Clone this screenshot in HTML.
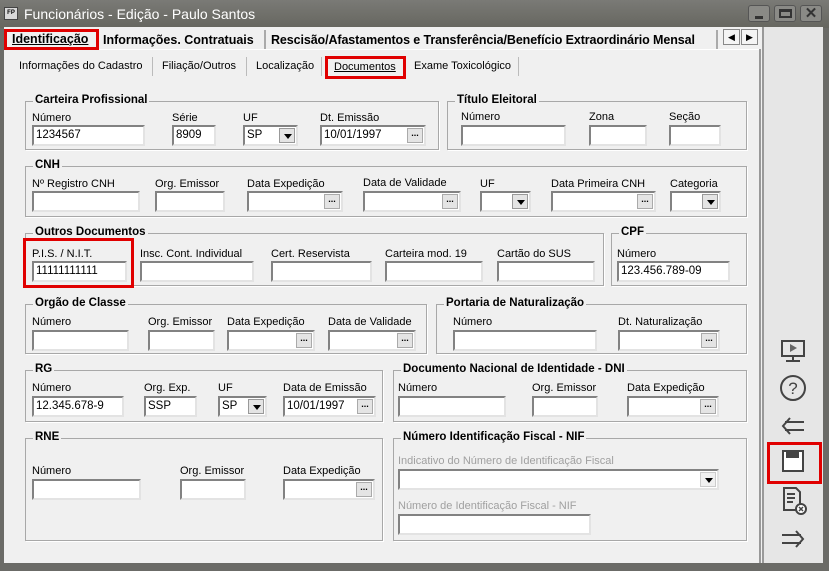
<!DOCTYPE html><html><head><meta charset="utf-8"><style>
*{margin:0;padding:0;box-sizing:border-box}
body{width:829px;height:571px;overflow:hidden;background:#6b6b67;font-family:"Liberation Sans",sans-serif;font-size:12px;color:#000;position:relative}
div,span{position:absolute}
.t{white-space:nowrap;font-size:11px}
.b{font-weight:bold;font-size:12px}
.g{position:absolute;border:1px solid #a8a8a8;box-shadow:1px 1px 0 #fff}
.g>.lg{top:-8px;left:7px;background:#f0f0f0;padding:0 2px;font-weight:bold;font-size:11.5px;white-space:nowrap}
.i{background:#fff;border:2px solid;border-color:#828282 #e3e3e3 #e3e3e3 #828282;height:21px;padding:2px 0 0 2px;font-size:11.5px;white-space:nowrap}
.bt{position:absolute;right:1px;top:1px;width:16px;height:15px;background:#e4e4e4;border:1px solid #aaa;font-size:9px;line-height:8px;text-align:center;font-weight:bold}
.dd{position:absolute;right:1px;top:1px;width:16px;height:15px;background:#e4e4e4;border:1px solid #999}
.dd:after{content:"";position:absolute;left:4px;top:5px;border:4px solid transparent;border-top:5px solid #000}
.ds{color:#a0a0a0}
</style></head><body>
<div style="left:0;top:0;width:829px;height:28px;background:linear-gradient(#7a7a76,#66665f)"></div>
<div style="left:4px;top:7px;width:14px;height:13px;background:#d8d8d8;border:1px solid #444;font-size:6px;font-weight:bold;text-align:center;line-height:11px">FP</div>
<div class="t" style="left:24px;top:6px;color:#fff;font-size:14px">Funcionários - Edição - Paulo Santos</div>
<div style="left:748px;top:5px;width:22px;height:17px;border:1px solid #555;border-radius:3px;background:#8a8a86"><span style="left:6px;top:10px;width:8px;height:3px;background:#333"></span></div>
<div style="left:774px;top:5px;width:22px;height:17px;border:1px solid #555;border-radius:3px;background:#8a8a86"><span style="left:4px;top:3px;width:13px;height:9px;border:2px solid #333;border-top-width:3px"></span></div>
<div style="left:800px;top:5px;width:22px;height:17px;border:1px solid #555;border-radius:3px;background:#8a8a86;color:#333;font-weight:bold;font-size:15px;text-align:center;line-height:15px">✕</div>
<div style="left:4px;top:27px;width:819px;height:536px;background:#f0f0f0"></div>
<div style="left:762px;top:27px;width:61px;height:536px;background:#e6e6e6;border-left:2px solid #999"></div>
<div style="left:4px;top:49px;width:757px;height:1px;background:#fff"></div>
<div style="left:759px;top:49px;width:2px;height:514px;background:#999"></div>
<div class="t b" style="left:12px;top:32px;font-size:12.5px;text-decoration:underline">Identificação</div>
<div style="left:4px;top:29px;width:95px;height:21px;border:3px solid #e00000"></div>
<div class="t b" style="left:103px;top:33px;font-size:12.5px">Informações. Contratuais</div>
<div style="left:264px;top:30px;width:2px;height:19px;background:#aaa"></div>
<div class="t b" style="left:271px;top:33px;font-size:12.5px;letter-spacing:-0.1px">Rescisão/Afastamentos e Transferência/Benefício Extraordinário Mensal</div>
<div style="left:716px;top:30px;width:2px;height:19px;background:#aaa"></div>
<div style="left:718px;top:28px;width:5px;height:20px;background:#f0f0f0"></div>
<div style="left:723px;top:29px;width:17px;height:16px;background:#f4f4f4;border:1px solid #888;font-size:9px;text-align:center;line-height:14px">◀</div>
<div style="left:741px;top:29px;width:17px;height:16px;background:#f4f4f4;border:1px solid #888;font-size:9px;text-align:center;line-height:14px">▶</div>
<div class="t" style="left:19px;top:60px">Informações do Cadastro</div>
<div style="left:152px;top:57px;width:1px;height:19px;background:#bbb"></div>
<div class="t" style="left:162px;top:60px">Filiação/Outros</div>
<div style="left:246px;top:57px;width:1px;height:19px;background:#bbb"></div>
<div class="t" style="left:256px;top:60px">Localização</div>
<div style="left:321px;top:57px;width:1px;height:19px;background:#bbb"></div>
<div class="t" style="left:334px;top:61px;text-decoration:underline">Documentos</div>
<div style="left:325px;top:56px;width:81px;height:23px;border:3px solid #e00000"></div>
<div class="t" style="left:414px;top:60px">Exame Toxicológico</div>
<div style="left:518px;top:57px;width:1px;height:19px;background:#bbb"></div>

<div class="g" style="left:25px;top:101px;width:414px;height:49px"><span class="lg">Carteira Profissional</span></div>
<div class="g" style="left:447px;top:101px;width:300px;height:49px"><span class="lg">Título Eleitoral</span></div>
<div class="g" style="left:25px;top:166px;width:722px;height:51px"><span class="lg">CNH</span></div>
<div class="g" style="left:25px;top:233px;width:579px;height:53px"><span class="lg">Outros Documentos</span></div>
<div class="g" style="left:611px;top:233px;width:136px;height:53px"><span class="lg">CPF</span></div>
<div class="g" style="left:25px;top:304px;width:402px;height:50px"><span class="lg">Orgão de Classe</span></div>
<div class="g" style="left:436px;top:304px;width:311px;height:50px"><span class="lg">Portaria de Naturalização</span></div>
<div class="g" style="left:25px;top:370px;width:358px;height:52px"><span class="lg">RG</span></div>
<div class="g" style="left:393px;top:370px;width:354px;height:52px"><span class="lg">Documento Nacional de Identidade - DNI</span></div>
<div class="g" style="left:25px;top:438px;width:358px;height:103px"><span class="lg">RNE</span></div>
<div class="g" style="left:393px;top:438px;width:354px;height:103px"><span class="lg">Número Identificação Fiscal - NIF</span></div>

<div class="t" style="left:32px;top:112px">Número</div><div class="i" style="left:32px;top:125px;width:113px">1234567</div>
<div class="t" style="left:172px;top:112px">Série</div><div class="i" style="left:172px;top:125px;width:44px">8909</div>
<div class="t" style="left:243px;top:112px">UF</div><div class="i" style="left:243px;top:125px;width:55px">SP<span class="dd"></span></div>
<div class="t" style="left:320px;top:112px">Dt. Emissão</div><div class="i" style="left:320px;top:125px;width:106px">10/01/1997<span class="bt">...</span></div>
<div class="t" style="left:461px;top:111px">Número</div><div class="i" style="left:461px;top:125px;width:105px"></div>
<div class="t" style="left:589px;top:111px">Zona</div><div class="i" style="left:589px;top:125px;width:58px"></div>
<div class="t" style="left:669px;top:111px">Seção</div><div class="i" style="left:669px;top:125px;width:52px"></div>
<div class="t" style="left:32px;top:178px">Nº Registro CNH</div><div class="i" style="left:32px;top:191px;width:108px"></div>
<div class="t" style="left:155px;top:178px">Org. Emissor</div><div class="i" style="left:155px;top:191px;width:70px"></div>
<div class="t" style="left:247px;top:178px">Data Expedição</div><div class="i" style="left:247px;top:191px;width:96px"><span class="bt">...</span></div>
<div class="t" style="left:363px;top:177px">Data de Validade</div><div class="i" style="left:363px;top:191px;width:98px"><span class="bt">...</span></div>
<div class="t" style="left:480px;top:178px">UF</div><div class="i" style="left:480px;top:191px;width:51px"><span class="dd"></span></div>
<div class="t" style="left:551px;top:178px">Data Primeira CNH</div><div class="i" style="left:551px;top:191px;width:105px"><span class="bt">...</span></div>
<div class="t" style="left:670px;top:178px">Categoria</div><div class="i" style="left:670px;top:191px;width:51px"><span class="dd"></span></div>
<div class="t" style="left:32px;top:248px">P.I.S. / N.I.T.</div><div class="i" style="left:32px;top:261px;width:95px">11111111111</div>
<div style="left:23px;top:238px;width:111px;height:50px;border:3px solid #e00000"></div>
<div class="t" style="left:140px;top:248px">Insc. Cont. Individual</div><div class="i" style="left:140px;top:261px;width:114px"></div>
<div class="t" style="left:271px;top:248px">Cert. Reservista</div><div class="i" style="left:271px;top:261px;width:101px"></div>
<div class="t" style="left:385px;top:248px">Carteira mod. 19</div><div class="i" style="left:385px;top:261px;width:98px"></div>
<div class="t" style="left:497px;top:248px">Cartão do SUS</div><div class="i" style="left:497px;top:261px;width:98px"></div>
<div class="t" style="left:617px;top:248px">Número</div><div class="i" style="left:617px;top:261px;width:113px">123.456.789-09</div>
<div class="t" style="left:32px;top:316px">Número</div><div class="i" style="left:32px;top:330px;width:97px"></div>
<div class="t" style="left:148px;top:316px">Org. Emissor</div><div class="i" style="left:148px;top:330px;width:67px"></div>
<div class="t" style="left:227px;top:316px">Data Expedição</div><div class="i" style="left:227px;top:330px;width:88px"><span class="bt">...</span></div>
<div class="t" style="left:328px;top:316px">Data de Validade</div><div class="i" style="left:328px;top:330px;width:88px"><span class="bt">...</span></div>
<div class="t" style="left:453px;top:316px">Número</div><div class="i" style="left:453px;top:330px;width:144px"></div>
<div class="t" style="left:618px;top:316px">Dt. Naturalização</div><div class="i" style="left:618px;top:330px;width:102px"><span class="bt">...</span></div>
<div class="t" style="left:32px;top:382px">Número</div><div class="i" style="left:32px;top:396px;width:92px">12.345.678-9</div>
<div class="t" style="left:144px;top:382px">Org. Exp.</div><div class="i" style="left:144px;top:396px;width:53px">SSP</div>
<div class="t" style="left:218px;top:382px">UF</div><div class="i" style="left:218px;top:396px;width:49px">SP<span class="dd"></span></div>
<div class="t" style="left:283px;top:382px">Data de Emissão</div><div class="i" style="left:283px;top:396px;width:93px">10/01/1997<span class="bt">...</span></div>
<div class="t" style="left:398px;top:382px">Número</div><div class="i" style="left:398px;top:396px;width:108px"></div>
<div class="t" style="left:532px;top:382px">Org. Emissor</div><div class="i" style="left:532px;top:396px;width:66px"></div>
<div class="t" style="left:627px;top:382px">Data Expedição</div><div class="i" style="left:627px;top:396px;width:92px"><span class="bt">...</span></div>
<div class="t" style="left:32px;top:465px">Número</div><div class="i" style="left:32px;top:479px;width:109px"></div>
<div class="t" style="left:180px;top:465px">Org. Emissor</div><div class="i" style="left:180px;top:479px;width:66px"></div>
<div class="t" style="left:283px;top:465px">Data Expedição</div><div class="i" style="left:283px;top:479px;width:92px"><span class="bt">...</span></div>
<div class="t ds" style="left:398px;top:455px">Indicativo do Número de Identificação Fiscal</div>
<div class="i" style="left:398px;top:469px;width:321px"><span class="dd" style="background:#f0f0f0;border-color:#ccc"></span></div>
<div class="t ds" style="left:398px;top:500px">Número de Identificação Fiscal - NIF</div>
<div class="i" style="left:398px;top:514px;width:193px"></div>

<svg style="position:absolute;left:770px;top:330px" width="50" height="230" viewBox="0 0 50 230" fill="none" stroke="#444" stroke-width="2">
<rect x="12" y="11" width="22" height="15"/><path d="M23 26v4M16 31h14"/><path d="M20 14l7 4-7 4z" fill="#666" stroke="none"/>
<circle cx="23" cy="58" r="12"/><text x="23" y="64" font-size="17" text-anchor="middle" fill="#444" stroke="none" font-family="Liberation Sans">?</text>
<path d="M34 92H15M34 100H15M20 88l-7 8 7 8"/>
<rect x="13" y="121" width="20" height="20" fill="#fff"/><rect x="16" y="121" width="13" height="7" fill="#444" stroke="none"/><path d="M15 141h16" />
<path d="M14 158h12l4 4v18H14z"/><path d="M17 164h8M17 168h8M17 172h6"/><circle cx="31" cy="179" r="5" fill="#fff"/><path d="M29 177l4 4M33 177l-4 4" stroke-width="1.5"/>
<path d="M12 205h19M12 213h19M26 201l7 8-7 8"/>
</svg>
<div style="left:767px;top:442px;width:55px;height:42px;border:3px solid #e00000"></div>
</body></html>
